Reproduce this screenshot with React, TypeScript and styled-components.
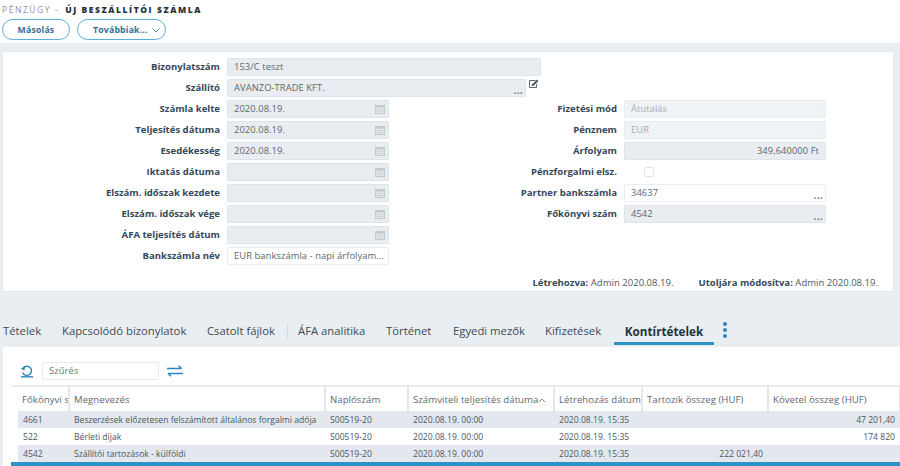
import React from "react";
import styled, { createGlobalStyle } from "styled-components";

const Global = createGlobalStyle`
  html, body { margin: 0; padding: 0; background: #e9eef2; overflow: hidden; }
  body { font-family: "Open Sans", "Noto Sans", sans-serif; color: #3f4a52; }
  * { box-sizing: border-box; }
`;
const Page = styled.div`width: 900px; height: 466px; overflow: hidden; display: flex; flex-direction: column;`;
const Top = styled.header`height: 43px; background: #fff; padding: 3px 2px 0;`;
const Crumb = styled.div`display: flex; align-items: center; height: 12px; font-size: 8.5px; letter-spacing: 1.55px; font-family: "Open Sans", sans-serif; gap: 6px;`;
const CrumbMuted = styled.span`color: #8b979f; font-weight: 400;`;
const CrumbStrong = styled.span`color: #26323a; font-weight: 800; letter-spacing: 1.58px;`;
const Buttons = styled.div`display: flex; gap: 7px; margin-top: 4px;`;
const Pill = styled.button<{ $w: number; $start?: boolean }>`
  width: ${p => p.$w}px; height: 21px; border: 1px solid #5aaedb; border-radius: 11px; background: #fff; color: #2f6f97;
  font: 700 8.7px "Open Sans", sans-serif; letter-spacing: .2px; display: flex; align-items: center;
  justify-content: ${p => (p.$start ? "flex-start" : "center")}; gap: 3px; padding: 0 0 0 ${p => (p.$start ? 15 : 0)}px;
`;
const Panel = styled.section`
  width: 892px; height: 241px; margin: 8px 0 0 2px; background: #fff; border: 1px solid #e3e9ee; padding: 6px 0 0; display: flex; flex-direction: column;
`;
const Form = styled.div`
  display: grid; grid-template-columns: 217px 162px 221px 202px; column-gap: 7px; grid-auto-rows: 18px; row-gap: 3px;
`;
const Label = styled.label<{ $c?: number }>`
  grid-column: ${p => p.$c ?? 1}; font-size: 9.55px; font-weight: 700; color: #34485a; text-align: right; line-height: 18px; white-space: nowrap;
`;
const Field = styled.div<{ $c?: number; $w?: number; $white?: boolean; $align?: string; $muted?: boolean }>`
  grid-column: ${p => p.$c ?? 2}; width: ${p => (p.$w ? p.$w + "px" : "100%")}; height: 18px; position: relative;
  background: ${p => (p.$white ? "#fff" : p.$muted ? "#f0f3f6" : "#e9edf1")}; border: 1px solid ${p => (p.$white ? "#e8edf1" : p.$muted ? "#e8edf1" : "#dde4ea")}; border-radius: 1px;
  color: ${p => (p.$muted ? "#a3abb1" : "#5d666d")}; font-size: 9.35px; line-height: 16px; padding: 0 6px; letter-spacing: .08px; text-align: ${p => p.$align ?? "left"}; white-space: nowrap; overflow: hidden;
`;
const Wide = styled.div`grid-column: 2 / -1; display: flex; align-items: flex-start; gap: 2px;`;
const Dots = styled.span`position: absolute; right: 2px; bottom: 3px; line-height: 6px; font-size: 10px; font-weight: 700; color: #6e7d88; letter-spacing: .3px;`;
const IconSlot = styled.span`position: absolute; right: 3px; top: 3px; display: flex; width: 10px; height: 10px;`;
const Check = styled.span`grid-column: 4; margin: 4px 0 0 20px; width: 10px; height: 10px; border: 1px solid #dfe4e8; border-radius: 2px; background: #fff;`;
const Meta = styled.div`display: flex; justify-content: flex-end; gap: 25px; padding: 0 15px 0 0; margin-top: 11px; font-size: 9.55px; color: #4f5b63;`;
const MetaKey = styled.b`color: #34485a; font-weight: 700;`;
const Tabs = styled.nav`height: 55px; display: flex; align-items: flex-end; padding: 0 0 2px 3px; font-size: 11.3px;`;
const Tab = styled.div<{ $w: number; $active?: boolean }>`
  width: ${p => p.$w}px; height: 27px; line-height: 26px; flex: none; white-space: nowrap;
  color: ${p => (p.$active ? "#26323a" : "#3d4a52")}; font-weight: ${p => (p.$active ? 700 : 400)};
`;
const ActiveTab = styled(Tab)`
  width: 100px; text-align: center; border-bottom: 3px solid #2c93c9; margin-left: -10px; font-size: 11.7px;
`;
const Rule = styled.i`width: 1px; height: 16px; background: #d4dbe0; margin: 0 10px 6px 0; flex: none;`;
const Kebab = styled.div`margin: 0 0 4px 6px; width: 10px; height: 22px; display: flex; align-items: flex-start; flex-direction: column; gap: 2px; padding: 3px 0 0 3px;`;
const Dot = styled.i`width: 4px; height: 4px; border-radius: 50%; background: #2c86bd;`;
const Bottom = styled.section`flex: 1; margin-left: 3px; background: #fff; padding: 15px 0 0 8px; display: flex; flex-direction: column; overflow: hidden;`;
const Toolbar = styled.div`display: flex; align-items: center; height: 18px; padding-left: 9px; gap: 8px;`;
const Filter = styled.div`width: 117px; height: 18px; border: 1px solid #e6ebef; border-radius: 2px; color: #6b757c; font-size: 9.2px; line-height: 16px; padding-left: 6px; letter-spacing: .2px;`;
const Table = styled.table`border-collapse: collapse; table-layout: fixed; width: 889px; margin-top: 5px; border-top: 2px solid #e9eef2;`;
const Th = styled.th<{ $w: number }>`
  width: ${p => p.$w}px; height: 25px; font-size: 9.6px; font-weight: 400; text-align: left; color: #5d6a73; padding: 0 0 0 4px; letter-spacing: .05px; white-space: nowrap; overflow: hidden;
  border-right: 2px solid #e3e8ec; background: #fff;
  &:first-child { padding-left: 11px; }
`;
const Td = styled.td<{ $right?: boolean }>`
  height: 17px; font-size: 8.6px; padding: 0 5px 0 5px; color: #4c565d; white-space: nowrap; overflow: hidden; text-align: ${p => (p.$right ? "right" : "left")};
  &:first-child { padding-left: 12px; background: linear-gradient(to right, #fff 7px, transparent 7px); }
`;
const Tr = styled.tr<{ $shade?: boolean }>`
  background: ${p => (p.$shade ? "#e2e8ee" : "#fff")};
`;
const Bar = styled.div`height: 4px; background: #2c93c9; width: 889px;`;

const Calendar = () => (
  <svg width="10" height="10" viewBox="0 0 10 10"><path fill="#c3c9ce" d="M0 1h10v9H0z" /><path fill="#e9edf1" d="M1 3.5h1.6v1.4H1zM3.2 3.5h1.6v1.4H3.2zM5.4 3.5H7v1.4H5.4zM7.6 3.5H9v1.4H7.6zM1 5.5h1.6v1.4H1zM3.2 5.5h1.6v1.4H3.2zM5.4 5.5H7v1.4H5.4zM7.6 5.5H9v1.4H7.6zM1 7.5h1.6v1.4H1zM3.2 7.5h1.6v1.4H3.2zM5.4 7.5H7v1.4H5.4zM7.6 7.5H9v1.4H7.6z" /></svg>
);
const Chevron = ({ color = "#dfe4e8" }: { color?: string }) => (
  <svg width="10" height="10" viewBox="0 0 10 10" fill="none" stroke={color} strokeWidth="1"><path d="M1.5 3.5 5 7l3.5-3.5" /></svg>
);
const Edit = () => (
  <svg width="11" height="10" viewBox="0 0 11 10" fill="none"><path stroke="#5d6a73" d="M7.5 1.5h-6v7h7V5" /><path fill="#4c5861" d="M4 5.5 9 .6l1.4 1.3-5 5L3.6 7z" /></svg>
);
const Reset = () => (
  <svg width="14" height="14" viewBox="0 0 14 14" fill="none" stroke="#2c86bd" strokeWidth="1.4"><path d="M2.6 8.5a4.6 4.6 0 1 0 .6-4.4" /><path fill="#2c86bd" stroke="none" d="M.7 4.8 4.6 6.5 4.9 2z" /><path d="M1 12.8h12" /></svg>
);
const Swap = () => (
  <svg width="16" height="12" viewBox="0 0 16 12" fill="none" stroke="#2c86bd" strokeWidth="1.4"><path d="M0 3.5h14.5M11.5.8l3.2 2.7M1 8.5h15M4 11.2 1 8.5" /></svg>
);
const SortUp = () => (
  <svg width="8" height="6" viewBox="0 0 8 6" fill="none" stroke="#7c8890" strokeWidth="1"><path d="M1 5 4 2l3 3" /></svg>
);

const DateField = ({ value }: { value?: string }) => (
  <Field>{value}<IconSlot><Calendar /></IconSlot></Field>
);

const rows = [
  ["4661", "Beszerzések előzetesen felszámított általános forgalmi adója", "S00519-20", "2020.08.19. 00:00", "2020.08.19. 15:35", "", "47 201,40"],
  ["522", "Bérleti díjak", "S00519-20", "2020.08.19. 00:00", "2020.08.19. 15:35", "", "174 820"],
  ["4542", "Szállítói tartozások - külföldi", "S00519-20", "2020.08.19. 00:00", "2020.08.19. 15:35", "222 021,40", ""],
];

export default function App() {
  return (
    <Page>
      <Global />
      <Top>
        <Crumb><CrumbMuted>PÉNZÜGY -</CrumbMuted><CrumbStrong>ÚJ BESZÁLLÍTÓI SZÁMLA</CrumbStrong></Crumb>
        <Buttons>
          <Pill $w={68}>Másolás</Pill>
          <Pill $w={89} $start>Továbbiak...<Chevron color="#5d8aa6" /></Pill>
        </Buttons>
      </Top>
      <Panel>
        <Form>
          <Label>Bizonylatszám</Label>
          <Wide><Field $w={314}>153/C teszt</Field></Wide>
          <Label>Szállító</Label>
          <Wide><Field $w={299}>AVANZO-TRADE KFT.<Dots>...</Dots></Field><Edit /></Wide>
          <Label>Számla kelte</Label><DateField value="2020.08.19." />
          <Label $c={3}>Fizetési mód</Label><Field $c={4} $muted>Átutalás<IconSlot><Chevron /></IconSlot></Field>
          <Label>Teljesítés dátuma</Label><DateField value="2020.08.19." />
          <Label $c={3}>Pénznem</Label><Field $c={4} $muted>EUR<IconSlot><Chevron /></IconSlot></Field>
          <Label>Esedékesség</Label><DateField value="2020.08.19." />
          <Label $c={3}>Árfolyam</Label><Field $c={4} $align="right">349,640000 Ft</Field>
          <Label>Iktatás dátuma</Label><DateField />
          <Label $c={3}>Pénzforgalmi elsz.</Label><Check />
          <Label>Elszám. időszak kezdete</Label><DateField />
          <Label $c={3}>Partner bankszámla</Label><Field $c={4} $white>34637<Dots>...</Dots></Field>
          <Label>Elszám. időszak vége</Label><DateField />
          <Label $c={3}>Főkönyvi szám</Label><Field $c={4}>4542<Dots>...</Dots></Field>
          <Label>ÁFA teljesítés dátum</Label><DateField />
          <Label>Bankszámla név</Label>
          <Field $white>EUR bankszámla - napi árfolyam...</Field>
        </Form>
        <Meta>
          <span><MetaKey>Létrehozva:</MetaKey> Admin 2020.08.19.</span>
          <span><MetaKey>Utoljára módosítva:</MetaKey> Admin 2020.08.19.</span>
        </Meta>
      </Panel>
      <Tabs>
        <Tab $w={59}>Tételek</Tab>
        <Tab $w={145}>Kapcsolódó bizonylatok</Tab>
        <Tab $w={80}>Csatolt fájlok</Tab>
        <Rule />
        <Tab $w={88}>ÁFA analitika</Tab>
        <Tab $w={67}>Történet</Tab>
        <Tab $w={92}>Egyedi mezők</Tab>
        <Tab $w={79}>Kifizetések</Tab>
        <ActiveTab $w={100} $active>Kontírtételek</ActiveTab>
        <Kebab><Dot /><Dot /><Dot /></Kebab>
      </Tabs>
      <Bottom>
        <Toolbar><Reset /><Filter>Szűrés</Filter><Swap /></Toolbar>
        <Table>
          <thead>
            <tr>
              <Th $w={58}>Főkönyvi s</Th>
              <Th $w={256}>Megnevezés</Th>
              <Th $w={83}>Naplószám</Th>
              <Th $w={146}>Számviteli teljesítés dátuma<SortUp /></Th>
              <Th $w={88}>Létrehozás dátum</Th>
              <Th $w={126}>Tartozik összeg (HUF)</Th>
              <Th $w={132}>Követel összeg (HUF)</Th>
            </tr>
          </thead>
          <tbody>
            {rows.map((r, i) => (
              <Tr key={r[0]} $shade={i % 2 === 0}>
                {r.map((c, j) => (
                  <Td key={j} $right={j >= 5}>{c}</Td>
                ))}
              </Tr>
            ))}
          </tbody>
        </Table>
        <Bar />
      </Bottom>
    </Page>
  );
}
